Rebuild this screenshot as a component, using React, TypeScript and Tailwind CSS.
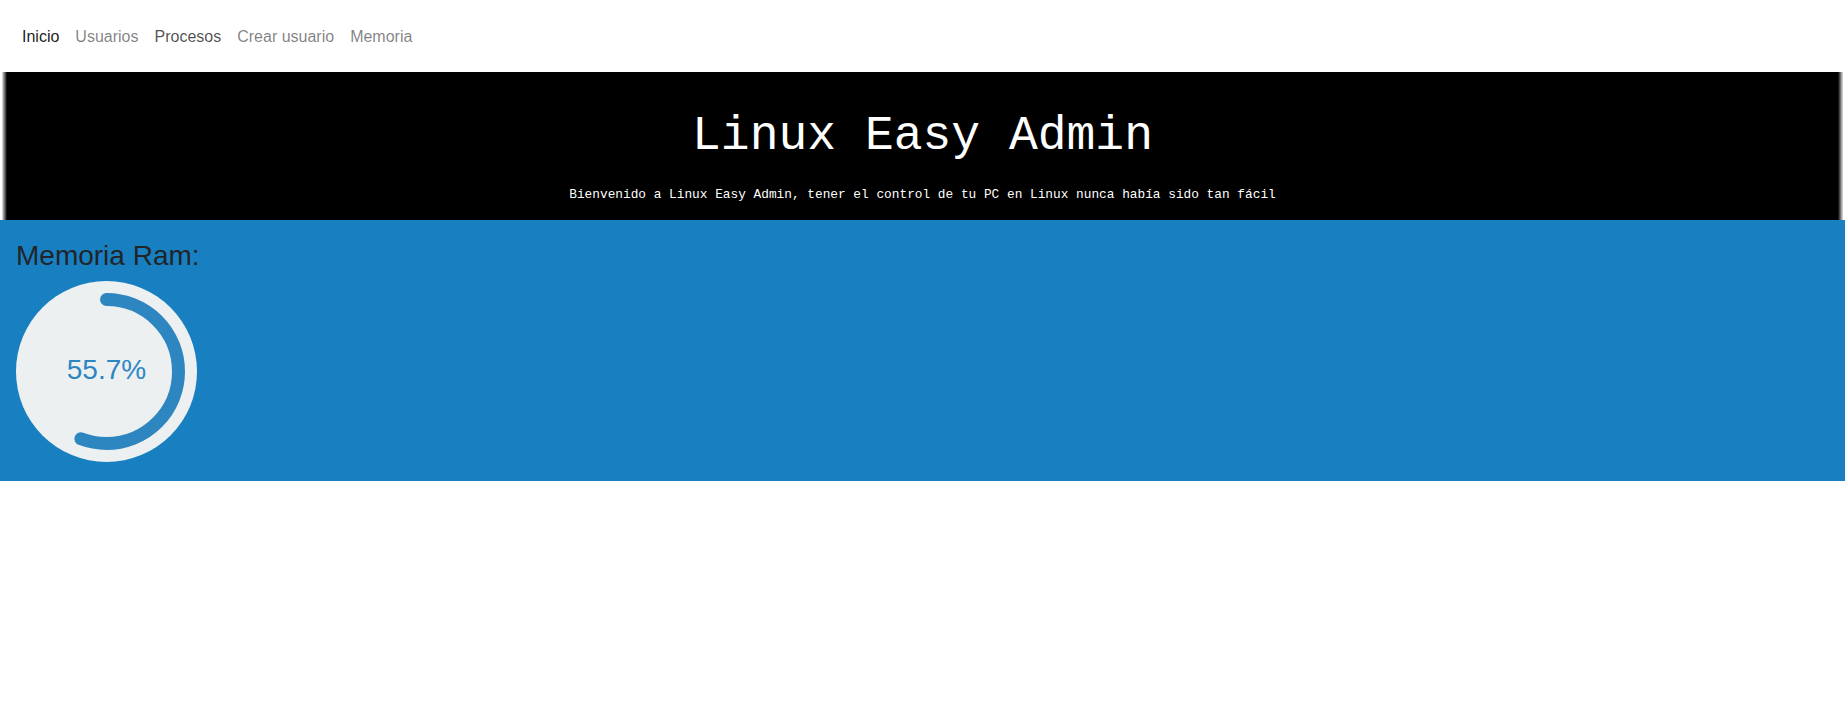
const links = [
  { label: "Inicio", cls: "text-black/90" },
  { label: "Usuarios", cls: "text-black/50" },
  { label: "Procesos", cls: "text-black/70" },
  { label: "Crear usuario", cls: "text-black/50" },
  { label: "Memoria", cls: "text-black/50" },
];

function RamGauge({ value }: { value: number }) {
  const r = 72;
  const c = 2 * Math.PI * r;
  return (
    <div className="grid h-[181px] w-[181px] place-items-center">
      <svg width="181" height="181" viewBox="0 0 181 181" className="[grid-area:1/1]">
        <circle cx="90.5" cy="90.5" r="90.5" fill="#ecf0f1" />
        <circle
          cx="90.5"
          cy="90.5"
          r={r}
          fill="none"
          stroke="#2e86c1"
          strokeWidth="13"
          strokeLinecap="round"
          strokeDasharray={`${(c * value) / 100} ${c}`}
          transform="rotate(-90 90.5 90.5)"
        />
      </svg>
      <span className="[grid-area:1/1] mb-[3px] text-[28px] leading-none text-[#2e86c1]">{value}%</span>
    </div>
  );
}

export default function App() {
  return (
    <div className="min-h-screen bg-white font-['Liberation_Sans',Arial,sans-serif]">
      <nav className="flex items-center px-[14px] pt-[17px] pb-[15px]">
        {links.map((l) => (
          <a key={l.label} href="#" className={`px-2 py-2 text-base leading-6 ${l.cls}`}>
            {l.label}
          </a>
        ))}
      </nav>

      <header className="mx-[2px] flex h-[148px] flex-col items-center bg-[linear-gradient(90deg,#e5e5e5_0px,#000_5px,#000_calc(100%-5px),#e5e5e5_100%)] font-['Liberation_Mono',monospace] text-white">
        <h1 className="mt-[36px] text-[48px] leading-[1.2]">Linux Easy Admin</h1>
        <p className="mt-[19px] text-[12.8px] leading-[1.5]">
          Bienvenido a Linux Easy Admin, tener el control de tu PC en Linux nunca había sido tan fácil
        </p>
      </header>

      <section className="bg-[#1880c1] px-[16px] pt-[19px] pb-[19px]">
        <h3 className="mb-2 text-[28px] leading-[1.2] text-[#212529]">Memoria Ram:</h3>
        <RamGauge value={55.7} />
      </section>
    </div>
  );
}
